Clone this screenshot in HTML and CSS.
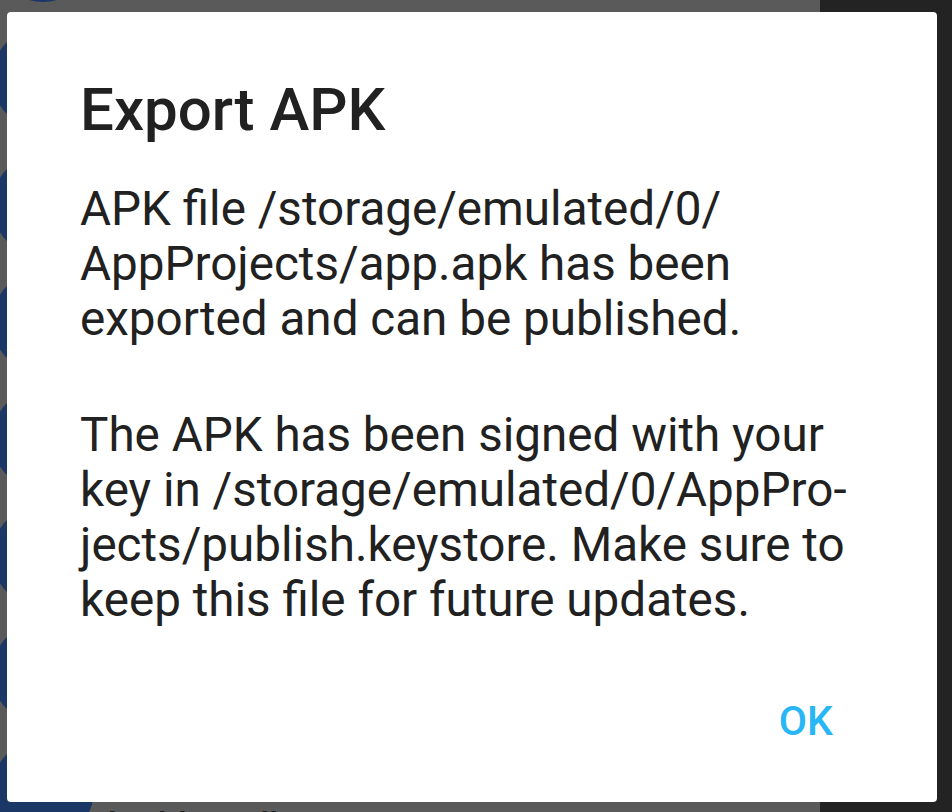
FILE: index.html
```html
<!DOCTYPE html>
<html lang="en">
<head>
<meta charset="utf-8">
<title>Export APK</title>
<link rel="stylesheet" href="styles.css">
</head>
<body>
<div class="app">
  <div class="main">
    <ul class="list">
      <li class="row gap"><span class="icon"></span></li>
      <li class="row gap"><span class="icon"></span><span class="name">src</span></li>
      <li class="row"><span class="icon"></span><span class="name">res</span></li>
      <li class="row"><span class="icon"></span><span class="name">libs</span></li>
      <li class="row"><span class="icon"></span><span class="name">assets</span></li>
      <li class="row"><span class="icon"></span><span class="name">bin</span></li>
      <li class="row"><span class="icon"></span><span class="name">gen</span></li>
      <li class="row"><span class="icon"></span><span class="name">build.gradle</span></li>
    </ul>
  </div>
  <div class="side"></div>
</div>

<div class="dialog" role="dialog" aria-labelledby="dlg-title">
  <h1 class="dialog-title" id="dlg-title">Export APK</h1>
  <div class="dialog-body">
    <p>APK file /storage/emulated/0/<br>AppProjects/app.apk has been<br>exported and can be published.</p>
    <p>The APK has been signed with your<br>key in /storage/emulated/0/AppPro-<br>jects/publish.keystore. Make sure to<br>keep this file for future updates.</p>
  </div>
  <div class="dialog-actions">
    <button class="btn-ok" type="button">OK</button>
  </div>
</div>
</body>
</html>
```

FILE: styles.css
```css
* { box-sizing: border-box; }

html, body {
  margin: 0;
  padding: 0;
  width: 952px;
  height: 812px;
  overflow: hidden;
  background: #5b5b5b;
  font-family: Roboto, "Noto Sans", "Liberation Sans", sans-serif;
}

.app {
  display: grid;
  grid-template-columns: 820px 1fr;
  width: 952px;
  height: 812px;
}

.main {
  background: #5a5a5a;
  overflow: hidden;
}

.side {
  background: #232323;
}

.list {
  list-style: none;
  margin: -108px 0 0 0;
  padding: 0;
}

.row {
  height: 117px;
  display: flex;
  align-items: center;
  gap: 14px;
}

.row.gap {
  margin-bottom: 10px;
}

.icon {
  flex: none;
  width: 102px;
  height: 102px;
  margin-left: -8px;
  border-radius: 50%;
  background: #1b3766;
}

.name {
  align-self: flex-end;
  margin-bottom: 0;
  font-size: 36px;
  font-weight: 500;
  line-height: 44px;
  color: #1c1c1c;
}

.dialog {
  position: absolute;
  left: 7px;
  top: 12px;
  width: 930px;
  height: 790px;
  background: #ffffff;
  border-radius: 4px;
  display: flex;
  flex-direction: column;
  padding: 65px 0 0 73px;
  color: #212121;
}

.dialog-title {
  margin: 0;
  font-size: 60px;
  line-height: 66px;
  font-weight: 500;
}

.dialog-body {
  margin-top: 39px;
  font-size: 47.6px;
  line-height: 55px;
  font-weight: 400;
}

.dialog-body p {
  margin: 0;
}

.dialog-body p + p {
  margin-top: 61px;
}

.dialog-actions {
  margin-top: auto;
  display: flex;
  justify-content: flex-end;
  padding: 0 104px 57px 0;
}

.btn-ok {
  border: 0;
  background: transparent;
  padding: 0;
  font-family: inherit;
  font-size: 41px;
  line-height: 48px;
  font-weight: 500;
  color: #29b6f6;
}
```
